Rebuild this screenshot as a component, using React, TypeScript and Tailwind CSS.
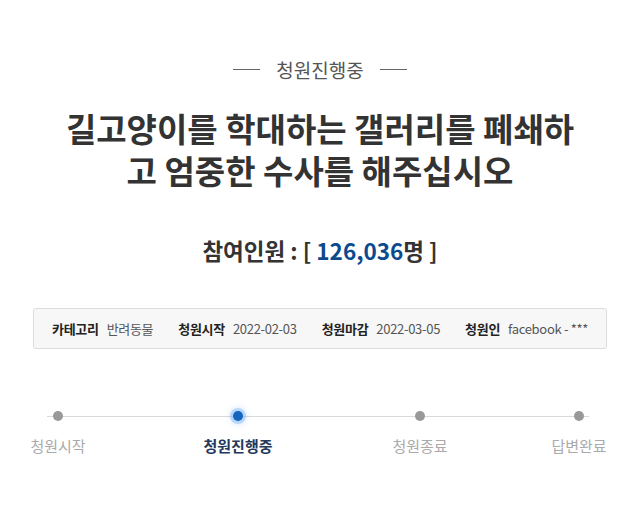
const FONT = "font-['Noto_Sans_CJK_KR','Noto_Sans',sans-serif]";

const infoItems = [
  { label: '카테고리', value: '반려동물' },
  { label: '청원시작', value: '2022-02-03' },
  { label: '청원마감', value: '2022-03-05' },
  { label: '청원인', value: 'facebook - ***' },
];

const steps = [
  { name: '청원시작', active: false, gap: 'ml-0' },
  { name: '청원진행중', active: true, gap: 'ml-[120px]' },
  { name: '청원종료', active: false, gap: 'ml-[122px]' },
  { name: '답변완료', active: false, gap: 'ml-[99px]' },
];

export default function App() {
  return (
    <div className={`w-[640px] h-[523px] bg-white ${FONT} overflow-hidden`}>
      {/* status header */}
      <div className="pt-[57px] flex items-center justify-center gap-4 h-[82px]">
        <span className="w-[27px] h-px bg-[#666]" />
        <span className="text-[19px] leading-[25px] text-[#555]">청원진행중</span>
        <span className="w-[27px] h-px bg-[#666]" />
      </div>

      {/* title */}
      <h1 className="mt-[25px] flex flex-col items-center text-[33px] font-bold text-[#333]">
        <span className="leading-[42px]">길고양이를 학대하는 갤러리를 폐쇄하</span>
        <span className="leading-[42px]">고 엄중한 수사를 해주십시오</span>
      </h1>

      {/* participants */}
      <div className="mt-[44px] text-center text-[22.5px] leading-[30px] font-bold text-[#333]">
        참여인원 : [ <span className="text-[#0b4a8f]">126,036</span>명 ]
      </div>

      {/* info box */}
      <div className="mt-[43px] mx-[33px] h-[41px] bg-[#f7f7f7] border border-[#dcdcdc] rounded-[3px] flex items-center pl-[18px] gap-[25px] text-[13px]">
        {infoItems.map((item) => (
          <div key={item.label} className="flex items-center gap-2 tracking-[-0.3px]">
            <span className="font-bold text-[#222]">{item.label}</span>
            <span className="text-[#555]">{item.value}</span>
          </div>
        ))}
      </div>

      {/* progress */}
      <div className="relative mt-[62px]">
        <div className="absolute left-[47px] w-[542px] top-[5px] h-px bg-[#d9d9d9]" />
        <div className="relative flex pl-[28px]">
          {steps.map((s) => (
            <div key={s.name} className={`${s.gap} w-[60px] flex flex-col items-center`}>
              {s.active ? (
                <span className="w-[10px] h-[10px] rounded-full bg-[#1565c0] shadow-[0_0_0_3px_rgba(100,170,240,0.35),0_0_6px_3px_rgba(100,170,240,0.3)]" />
              ) : (
                <span className="w-[10px] h-[10px] rounded-full bg-[#999]" />
              )}
              <span
                className={`mt-[14px] whitespace-nowrap text-[15px] leading-[22px] ${
                  s.active ? 'font-bold text-[#24375c]' : 'text-[#aaa]'
                }`}
              >
                {s.name}
              </span>
            </div>
          ))}
        </div>
      </div>
    </div>
  );
}
